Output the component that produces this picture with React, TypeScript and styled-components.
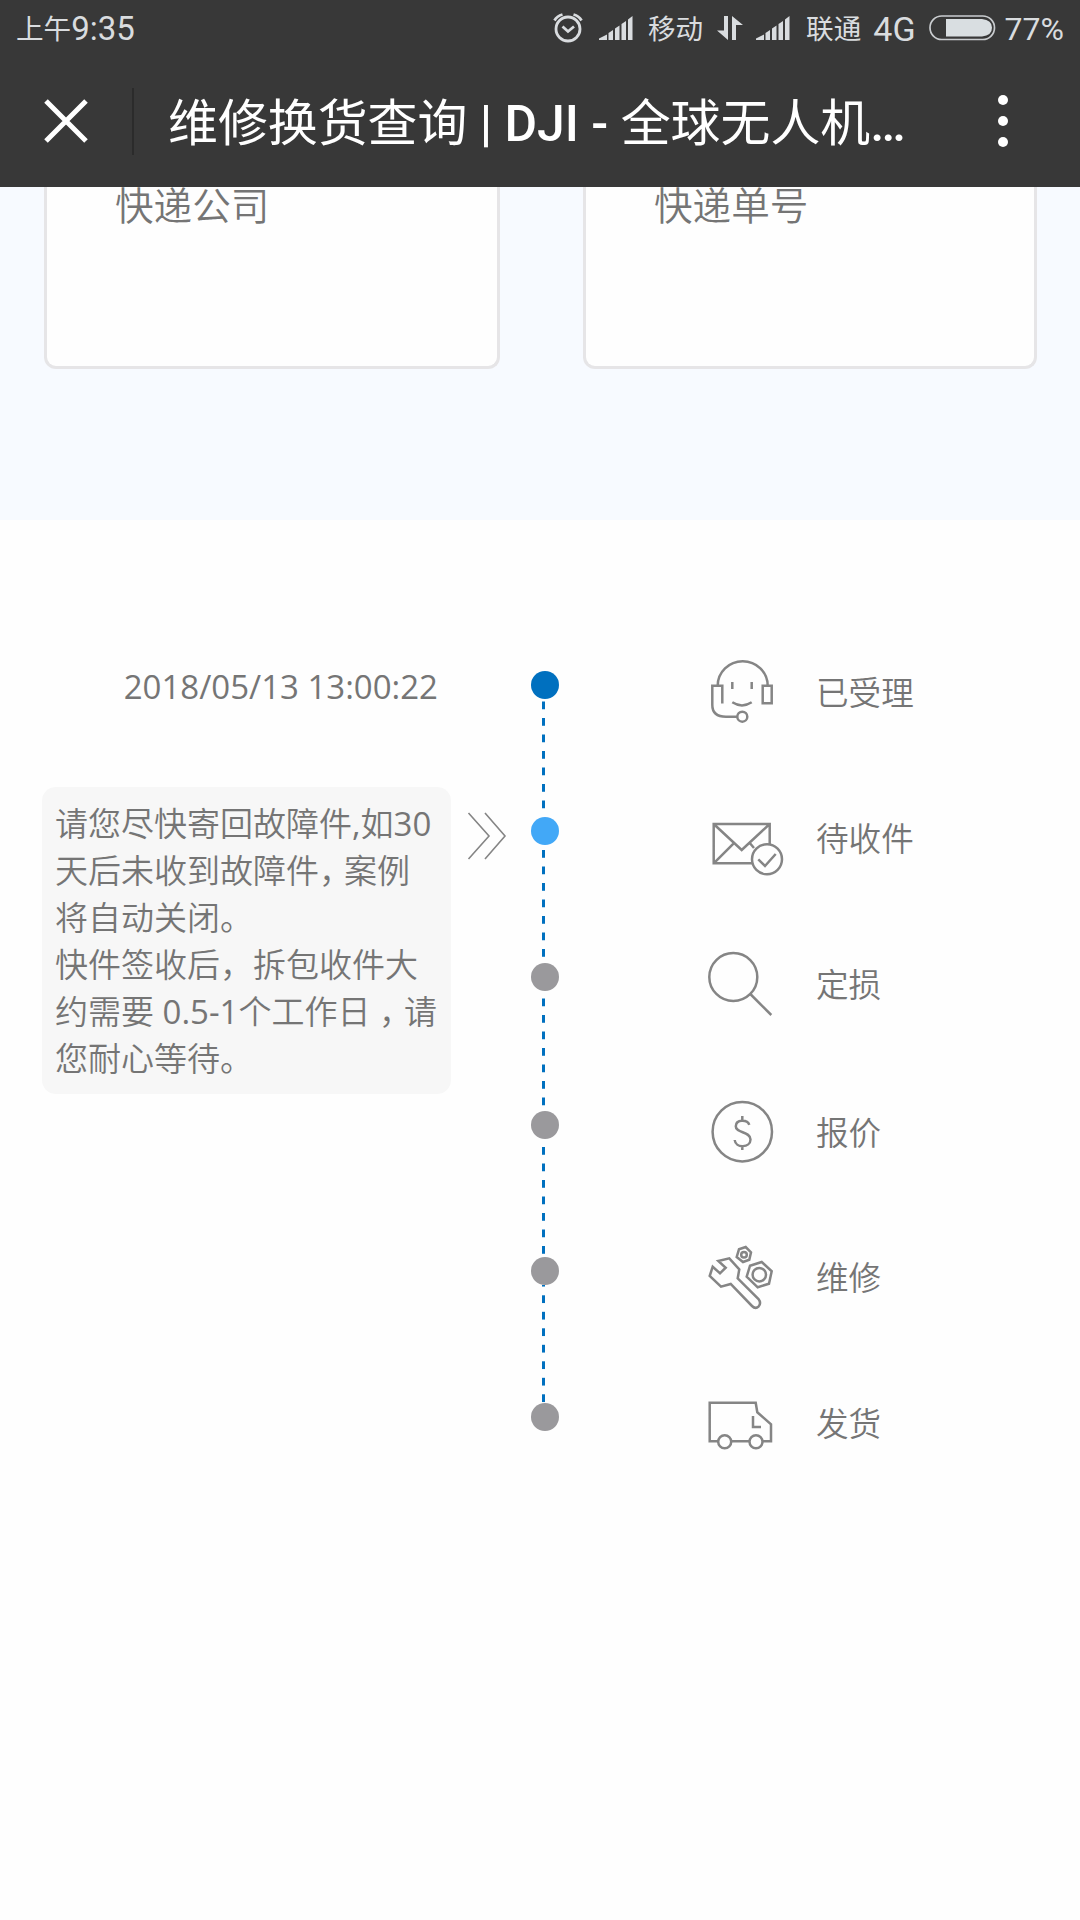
import React from "react";
import styled, { createGlobalStyle } from "styled-components";

const Global = createGlobalStyle`
  *, *::before, *::after { box-sizing: border-box; }
  html, body { margin: 0; padding: 0; background: #fefefe; }
`;

const Page = styled.div`
  width: 1080px;
  height: 1920px;
  overflow: hidden;
  display: flex;
  flex-direction: column;
  background: #fefefe;
  color: #757575;
  font-family: "Open Sans", "Noto Sans CJK SC", sans-serif;
`;

const Header = styled.header`
  flex: none;
  height: 187px;
  background: #383838;
  color: #fff;
  font-family: Roboto, "Noto Sans CJK SC", sans-serif;
`;

const StatusBar = styled.div`
  height: 60px;
  padding: 0 16px 4px;
  display: flex;
  align-items: center;
  color: #d9dcdf;
  line-height: 56px;
  white-space: nowrap;
`;

const Cjk = styled.span`
  padding-top: 3px;
  font-size: 27.6px;
  font-weight: 400;
`;

const Latin = styled.span<{ $size?: number }>`
  padding-top: 2px;
  font-size: ${(p) => p.$size ?? 32}px;
`;

const Clock = styled.div`
  display: flex;
  flex: 1;
`;

const Gap = styled.span<{ $w: number }>`
  flex: none;
  width: ${(p) => p.$w}px;
`;

const TitleBar = styled.div`
  height: 122px;
  display: flex;
  align-items: center;
`;

const CloseCell = styled.div`
  width: 134px;
  height: 67px;
  display: flex;
  align-items: center;
  padding-left: 43px;
  border-right: 2px solid #2b2b2b;
`;

const Title = styled.h1`
  margin: 0;
  width: 745px;
  padding: 6px 0 0 34px;
  font-size: 49.9px;
  font-weight: 500;
  line-height: 70px;
  white-space: nowrap;
`;

const TitleCjk = styled.span`
  font-weight: 400;
`;

const MoreCell = styled.div`
  flex: 1;
  display: flex;
  flex-direction: column;
  align-items: center;
  gap: 11px;
  padding-left: 46px;
`;

const MoreDot = styled.span`
  width: 10px;
  height: 10px;
  border-radius: 50%;
  background: #fff;
`;

const Shipping = styled.section`
  flex: none;
  height: 333px;
  display: grid;
  grid-template-columns: 456px 454px;
  gap: 83px;
  padding-left: 44px;
  background: #f7faff;
`;

const ShipCard = styled.div`
  height: 182px;
  padding-left: 68px;
  border: 3px solid #e6e5e7;
  border-top: none;
  border-radius: 0 0 12px 12px;
  background: #fefefe;
  font-size: 38.6px;
  font-weight: 350;
  line-height: 37px;
`;

const Progress = styled.main`
  display: flex;
  padding-top: 130px;
`;

const NoteColumn = styled.div`
  width: 451px;
  flex: none;
  padding-left: 42px;
`;

const Time = styled.div`
  height: 137px;
  padding: 14px 13px 0 0;
  text-align: right;
  font-size: 33px;
  font-weight: 400;
  line-height: 46px;
`;

const Note = styled.div`
  height: 307px;
  border-radius: 14px;
  background: #f7f7f7;
  padding: 14px 0 0 13px;
  font-size: 33px;
  font-weight: 350;
  line-height: 46.9px;
  white-space: nowrap;
`;

const Digits = styled.span`
  font-weight: 400;
`;

const Comma = styled.span`
  letter-spacing: -8px;
`;

const ArrowColumn = styled.div`
  width: 79px;
  flex: none;
  padding: 162px 0 0 16px;
`;

const Rail = styled.div`
  width: 29px;
  flex: none;
  padding-top: 21px;
  display: flex;
  flex-direction: column;
  align-items: center;
`;

const Dot = styled.span<{ $color: string }>`
  width: 28px;
  height: 28px;
  flex: none;
  border-radius: 50%;
  background: ${(p) => p.$color};
`;

const Dashes = styled.span<{ $h: number; $lead: number }>`
  width: 3px;
  height: ${(p) => p.$h}px;
  flex: none;
  margin-left: -2px;
  background: linear-gradient(#0070bf 0 8px, transparent 8px) 0 ${(p) => p.$lead}px / 3px 16.5px repeat-y;
`;

const Steps = styled.div`
  padding-left: 141px;
`;

const Step = styled.div<{ $h: number }>`
  height: ${(p) => p.$h}px;
  display: flex;
  font-size: 32.6px;
  font-weight: 350;
  line-height: 46px;
`;

const StepIcon = styled.svg`
  width: 80px;
  height: 80px;
  flex: none;
  margin-right: 36px;
  overflow: visible;
  fill: none;
  stroke: #858585;
  stroke-width: 2.5px;
`;

const StepLabel = styled.span`
  padding-top: 20px;
`;

const Signal = () => (
  <svg width="34" height="24" viewBox="0 0 34 24" fill="#d9dcdf">
    <path d="M0 24V22.500L8 18.500V24ZM9.500 24V17L14 14V24ZM16 24V12.500L20.500 9.500V24ZM22.500 24V8L27 5V24ZM29 24V3.500L33.500 0V24Z" />
  </svg>
);

const icons = {
  service: (
    <>
      <path d="M17.700 35.700A25 24.500 0 0 1 67.700 35.700M22.300 53.500V35.700H12.300V55Q12.300 66.700 26 66.700H37M62.700 35.700H71.700V53.300H62.700ZM32.300 32V39M51.700 32V39M32.300 52.300Q42 58.500 51.700 52.300" />
      <circle cx="42.300" cy="66.700" r="5" />
    </>
  ),
  mail: (
    <>
      <path d="M52.300 67.300H13.700V28H69.700V48M13.700 28 41.700 54 69.700 28M13.700 67.300 33.700 47.300M50 47.300 54 52" />
      <circle cx="67" cy="63.300" r="15" />
      <path d="M58.300 63.300 65 70 75.700 58" />
    </>
  ),
  search: (
    <>
      <circle cx="33.300" cy="35" r="24" />
      <path d="M50.300 52 71.300 73" />
    </>
  ),
  price: (
    <>
      <circle cx="42.300" cy="41.700" r="29.700" />
      <path d="M49.300 34.800C47.500 29.500 36 29 35.800 36.200C35.600 43.500 50.500 41 50.500 49.500C50.500 58 35.500 58.500 34.700 50M42.300 26V31M42.300 56V60" />
    </>
  ),
  repair: (
    <>
      <path d="M18.300 26 29.300 23.300 39.300 34.300 37.700 43.300 58.500 64Q61.500 68 58.700 71.300Q55.500 74.500 52 71L30.700 49 21 51.700 9.700 41 12.700 31.700 20 38.300 25.700 32.700Z" />
      <path d="M50 30.700 61.700 27 71.700 36.300 69 48.700 57.700 52.300 46.700 41.700ZM39 14.300 45.700 12 51 17.300 49.300 24.700 43 27 36.700 22Z" />
      <circle cx="59.300" cy="39.700" r="6.700" />
      <circle cx="44" cy="19.700" r="2.800" />
    </>
  ),
  truck: (
    <>
      <path d="M18.200 60.300H9.700V21.700H55.700L57.300 31.300 71 43.300V60.300H62.500M31.200 60.300H49.500M53 35V46H61" />
      <circle cx="24.700" cy="60.700" r="6.500" />
      <circle cx="56" cy="60.700" r="6.500" />
    </>
  ),
};

const steps: { label: string; icon: keyof typeof icons; h: number }[] = [
  { label: "已受理", icon: "service", h: 146 },
  { label: "待收件", icon: "mail", h: 146 },
  { label: "定损", icon: "search", h: 148 },
  { label: "报价", icon: "price", h: 145 },
  { label: "维修", icon: "repair", h: 146 },
  { label: "发货", icon: "truck", h: 146 },
];

const rail = [
  { color: "#0070bf", h: 118, lead: 2.5 },
  { color: "#42a8f7", h: 118, lead: 5 },
  { color: "#9a999c", h: 120, lead: 7.5 },
  { color: "#9a999c", h: 118, lead: 8 },
  { color: "#9a999c", h: 118, lead: 10.3 },
  { color: "#9a999c", h: 0, lead: 0 },
];

export default function App() {
  return (
    <Page>
      <Global />
      <Header>
        <StatusBar>
          <Clock>
            <Cjk>上午</Cjk>
            <Latin $size={33}>9:35</Latin>
          </Clock>
          <svg width="30" height="32" viewBox="0 0 30 32" fill="none" stroke="#d9dcdf" strokeWidth="2.8">
            <circle cx="15" cy="17" r="12" />
            <path d="M9.500 14.500 15 19.500 21 14.500M1.500 8.500Q4 4 9.500 2.500M28.500 8.500Q26 4 20.500 2.500" />
          </svg>
          <Gap $w={16} />
          <Signal />
          <Gap $w={15} />
          <Cjk>移动</Cjk>
          <Gap $w={14} />
          <svg width="26" height="26" viewBox="0 0 26 26" fill="#d9dcdf">
            <path d="M7 1H11V25L0 15.500H7ZM15 1 26 10H19V25H15Z" />
          </svg>
          <Gap $w={13} />
          <Signal />
          <Gap $w={16} />
          <Cjk>联通</Cjk>
          <Gap $w={12} />
          <Latin $size={34}>4G</Latin>
          <Gap $w={13} />
          <svg width="67" height="26" viewBox="0 0 67 26">
            <rect x="1" y="1" width="64.500" height="23.500" rx="11.750" fill="none" stroke="#c9cccf" strokeWidth="1.700" />
            <path d="M17 4H53Q63 5 63 12.750T53 21.500H17Z" fill="#d9dee1" />
          </svg>
          <Gap $w={9} />
          <Latin>77%</Latin>
        </StatusBar>
        <TitleBar>
          <CloseCell>
            <svg width="46" height="46" viewBox="0 0 46 46" stroke="#fff" strokeWidth="5">
              <path d="M3 3 43 43M43 3 3 43" />
            </svg>
          </CloseCell>
          <Title>
            <TitleCjk>维修换货查询</TitleCjk> | DJI - <TitleCjk>全球无人机</TitleCjk>…
          </Title>
          <MoreCell>
            <MoreDot />
            <MoreDot />
            <MoreDot />
          </MoreCell>
        </TitleBar>
      </Header>
      <Shipping>
        <ShipCard>快递公司</ShipCard>
        <ShipCard>快递单号</ShipCard>
      </Shipping>
      <Progress>
        <NoteColumn>
          <Time>2018/05/13 13:00:22</Time>
          <Note>
            请您尽快寄回故障件<Digits>,</Digits>如<Digits>30</Digits>
            <br />
            天后未收到故障件<Comma>，</Comma>案例
            <br />
            将自动关闭。
            <br />
            快件签收后，拆包收件大
            <br />
            约需要 <Digits>0.5-1</Digits>个工作日 <Comma>，</Comma>请
            <br />
            您耐心等待。
          </Note>
        </NoteColumn>
        <ArrowColumn>
          <svg width="40" height="48" viewBox="0 0 40 48" fill="none" stroke="#858585" strokeWidth="1.600">
            <path d="M1.500 1 22 24 1.500 47M18 1 38 24 18 47" />
          </svg>
        </ArrowColumn>
        <Rail>
          {rail.map((r, i) => (
            <React.Fragment key={i}>
              <Dot $color={r.color} />
              {r.h > 0 && <Dashes $h={r.h} $lead={r.lead} />}
            </React.Fragment>
          ))}
        </Rail>
        <Steps>
          {steps.map((s) => (
            <Step key={s.label} $h={s.h}>
              <StepIcon viewBox="0 0 80 80">{icons[s.icon]}</StepIcon>
              <StepLabel>{s.label}</StepLabel>
            </Step>
          ))}
        </Steps>
      </Progress>
    </Page>
  );
}
